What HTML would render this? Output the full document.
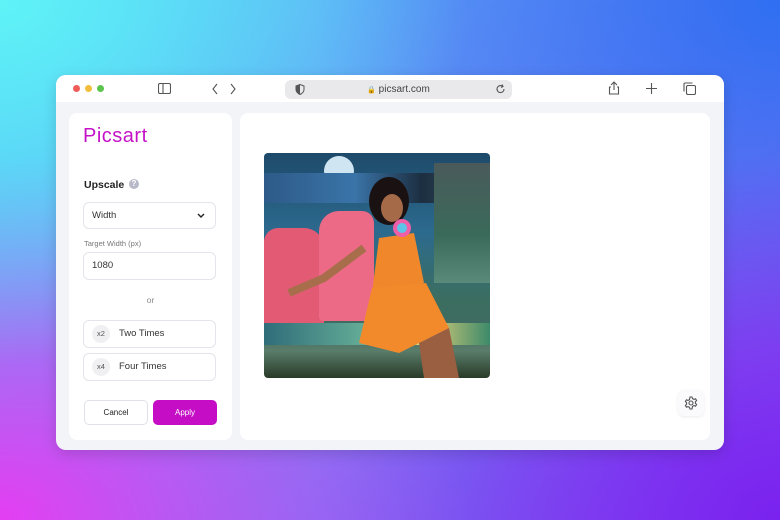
<!DOCTYPE html>
<html><head><meta charset="utf-8"><style>
*{margin:0;padding:0;box-sizing:border-box}
html,body{width:780px;height:520px;overflow:hidden}
body{font-family:"Liberation Sans",sans-serif;position:relative;
background:
radial-gradient(ellipse 60% 70% at 0% 0%,#5ff3f7 0%,rgba(95,243,247,0) 100%),
radial-gradient(ellipse 60% 70% at 0% 100%,#e43ef2 0%,rgba(228,62,242,0) 100%),
radial-gradient(ellipse 60% 70% at 100% 100%,#7a22ef 0%,rgba(122,34,239,0) 100%),
radial-gradient(ellipse 60% 70% at 100% 0%,#2f6ff2 0%,rgba(47,111,242,0) 100%),
linear-gradient(135deg,#4fc4f8,#8a4cf0);}
.win{position:absolute;left:56px;top:75px;width:668px;height:375px;background:#f3f4f8;border-radius:10px;overflow:hidden;box-shadow:0 4px 14px rgba(0,0,0,.15)}
.bar{position:absolute;left:0;top:0;width:100%;height:27px;background:#fff}
.dot{position:absolute;top:10px;width:7px;height:7px;border-radius:50%}
.url{position:absolute;left:229px;top:5px;width:227px;height:19px;background:#e9e9ec;border-radius:6px;font-size:10px;color:#444;text-align:center;line-height:19px}
.lp{position:absolute;left:13px;top:38px;width:163px;height:327px;background:#fff;border-radius:8px}
.rp{position:absolute;left:184px;top:38px;width:470px;height:327px;background:#fff;border-radius:8px}
.box{position:absolute;left:14px;width:133px;border:1px solid #e4e4ea;border-radius:6px;background:#fff;font-size:9.5px;color:#333}
.ic{stroke:#555;fill:none;stroke-width:1.1}
</style></head><body>
<div class="win">
 <div class="bar">
  <div class="dot" style="left:17px;background:#ee5b58"></div>
  <div class="dot" style="left:29px;background:#f2bd3b"></div>
  <div class="dot" style="left:41px;background:#5bc44d"></div>
  <svg style="position:absolute;left:102px;top:8px" width="13" height="11"><rect class="ic" x=".5" y=".5" width="12" height="10" rx="1.5"/><line class="ic" x1="5" y1="1" x2="5" y2="10"/></svg>
  <svg style="position:absolute;left:156px;top:8px" width="24" height="12"><path class="ic" d="M5 1L1 6l4 5M19 1l4 5-4 5"/></svg>
  <div class="url"><svg style="position:absolute;left:10px;top:4px" width="10" height="11"><path d="M5 .5L9 2v3.5c0 2.5-2 4-4 5-2-1-4-2.5-4-5V2z" fill="none" stroke="#555"/><path d="M5 .5V10.5c-2-1-4-2.5-4-5V2z" fill="#555"/></svg><span style="font-size:7px">🔒</span> picsart.com<svg style="position:absolute;right:6px;top:4px" width="10" height="11"><path class="ic" d="M8 5a3.5 3.5 0 1 1-1.5-2.8M6 .5l1 2-2 1"/></svg></div>
  <svg style="position:absolute;left:552px;top:6px" width="12" height="14"><path class="ic" d="M6 1v8M3 4l3-3 3 3M3 6H1.5v7h9V6H9"/></svg>
  <svg style="position:absolute;left:590px;top:8px" width="11" height="11"><path class="ic" d="M5.5 0v11M0 5.5h11"/></svg>
  <svg style="position:absolute;left:627px;top:7px" width="13" height="13"><rect class="ic" x="3.5" y="3.5" width="9" height="9" rx="1.5"/><path class="ic" d="M1 9.5V2a1 1 0 0 1 1-1h7.5"/></svg>
 </div>
 <div class="lp">
  <div style="position:absolute;left:14px;top:12px;font-size:20px;color:#c412c6;letter-spacing:.5px">Picsart</div>
  <div style="position:absolute;left:15px;top:66px;font-size:10.5px;font-weight:bold;color:#222">Upscale</div>
  <div style="position:absolute;left:60px;top:66px;width:10px;height:10px;border-radius:50%;background:#b7bac6;color:#fff;font-size:8px;text-align:center;line-height:10px;font-weight:bold">?</div>
  <div class="box" style="top:89px;height:27px;line-height:25px;padding-left:8px">Width<svg style="position:absolute;right:10px;top:10px" width="8" height="6"><path d="M1 1l3 3 3-3" stroke="#222" stroke-width="1.4" fill="none"/></svg></div>
  <div style="position:absolute;left:15px;top:126px;font-size:7.5px;color:#777">Target Width (px)</div>
  <div class="box" style="top:139px;height:28px;line-height:26px;padding-left:8px">1080</div>
  <div style="position:absolute;left:0;width:163px;top:182px;text-align:center;font-size:8.5px;color:#888">or</div>
  <div class="box" style="top:207px;height:28px;line-height:26px;padding-left:35px"><span style="position:absolute;left:8px;top:4px;width:18px;height:18px;border-radius:50%;background:#f0f0f3;font-size:7.5px;color:#555;text-align:center;line-height:18px">x2</span>Two Times</div>
  <div class="box" style="top:240px;height:28px;line-height:26px;padding-left:35px"><span style="position:absolute;left:8px;top:4px;width:18px;height:18px;border-radius:50%;background:#f0f0f3;font-size:7.5px;color:#555;text-align:center;line-height:18px">x4</span>Four Times</div>
  <div style="position:absolute;left:15px;top:287px;width:64px;height:25px;border:1px solid #e0e0e6;border-radius:5px;text-align:center;line-height:23px;font-size:8px;color:#222">Cancel</div>
  <div style="position:absolute;left:84px;top:287px;width:64px;height:25px;background:#c40dc4;border-radius:5px;text-align:center;line-height:25px;font-size:8px;color:#fff">Apply</div>
 </div>
 <div class="rp">
  <div style="position:absolute;left:24px;top:40px;width:226px;height:225px;border-radius:4px;overflow:hidden;background:linear-gradient(180deg,#1e4a6a 0%,#2c6a8e 35%,#3b6e60 65%,#3f6b62 78%,#5a7c6a 88%,#2a3a28 100%)">
   <div style="position:absolute;left:60px;top:3px;width:30px;height:30px;border-radius:50%;background:#cfe6f2"></div>
   <div style="position:absolute;left:0;top:20px;width:226px;height:30px;background:linear-gradient(90deg,#2d5a88,#3a74a8 40%,#1c2e40 70%,#3c5a6a)"></div>
   <div style="position:absolute;left:170px;top:10px;width:56px;height:120px;background:linear-gradient(180deg,#4a5a5a,#3a6a5a 60%,#5a8a7a)"></div>
   <div style="position:absolute;left:0;top:75px;width:60px;height:100px;background:#e35a75;border-radius:14px 20px 4px 4px"></div>
   <div style="position:absolute;left:55px;top:58px;width:55px;height:110px;background:#ec6a86;border-radius:20px 12px 4px 4px"></div>
   <div style="position:absolute;left:0;top:170px;width:226px;height:22px;background:linear-gradient(90deg,#2f6d7a,#6bb49a 50%,#e6d27a 70%,#3c8a6a)"></div>
   <svg style="position:absolute;left:0;top:0" width="226" height="225">
    <ellipse cx="125" cy="48" rx="20" ry="24" fill="#1a1212"/>
    <ellipse cx="128" cy="55" rx="11" ry="14" fill="#a56a48"/>
    <path d="M100 95 L60 125 L25 140" stroke="#a86e4c" stroke-width="8" fill="none"/>
    <path d="M115 85 L150 80 L160 130 L108 140 Z" fill="#f0872a"/>
    <path d="M108 135 L162 130 L185 175 L135 200 L95 190 Z" fill="#f28a2c"/>
    <path d="M155 190 L160 225 L195 225 L185 175 Z" fill="#9a5e40"/>
    <circle cx="138" cy="75" r="9" fill="#ee5fa8"/>
    <circle cx="138" cy="75" r="5" fill="#5cc4e8"/>
   </svg>
  </div>
  <div style="position:absolute;left:438px;top:277px;width:26px;height:26px;border-radius:6px;background:#fafafc;box-shadow:0 1px 3px rgba(0,0,0,.08)"><svg style="position:absolute;left:6px;top:6px" width="14" height="14"><circle cx="7" cy="7" r="2" class="ic"/><path class="ic" d="M6 1h2l.5 1.6 1.5.8 1.6-.6 1 1.7-1.2 1.2v1.6l1.2 1.2-1 1.7-1.6-.6-1.5.8L8 13H6l-.5-1.6-1.5-.8-1.6.6-1-1.7L2.6 8.3V6.7L1.4 5.5l1-1.7 1.6.6 1.5-.8z"/></svg></div>
 </div>
</div>
</body></html>
